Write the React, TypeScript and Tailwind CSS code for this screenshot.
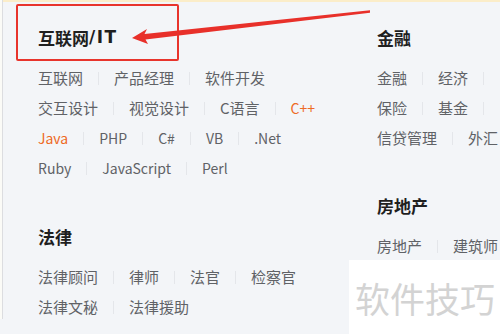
import React from "react";

type Item = { t: string; o?: boolean; l?: boolean };

const Sep = () => <span className="mx-[15px] h-[13px] w-px shrink-0 bg-[#e4e6ea]" />;

const Row = ({ items, trail }: { items: Item[]; trail?: boolean }) => (
  <div className="flex h-[30px] items-center whitespace-nowrap">
    {items.map((it, i) => (
      <React.Fragment key={i}>
        {i > 0 && <Sep />}
        <span
          className={`${it.o ? "text-[#ee6a25]" : "text-[#606266]"} ${it.l ? "text-[14px]" : ""}`}
        >
          {it.t}
        </span>
      </React.Fragment>
    ))}
    {trail && <Sep />}
  </div>
);

const Section = ({
  title,
  rows,
  trails = [],
  className = "",
}: {
  title: React.ReactNode;
  rows: Item[][];
  trails?: boolean[];
  className?: string;
}) => (
  <div className={className}>
    <div className="flex h-[30px] items-center text-[17px] font-bold text-[#1f1f1f]">{title}</div>
    <div className="mt-[10px]">
      {rows.map((r, i) => (
        <Row key={i} items={r} trail={trails[i]} />
      ))}
    </div>
  </div>
);

const s = (...a: string[]): Item[] => a.map((t) => ({ t }));
const L = (...a: string[]): Item[] => a.map((t) => ({ t, l: true }));

export default function App() {
  return (
    <div
      className="relative h-[334px] w-[500px] overflow-hidden bg-[#f3f5f8] text-[15px]"
      style={{ fontFamily: '"Noto Sans CJK SC", "Noto Sans", sans-serif' }}
    >
      <div className="h-[2px] w-full bg-[#fbedc9]" />
      <div className="absolute left-0 top-0 h-[319px] w-[3px] border-r border-[#dcdde0] bg-[#fbfbf7]" />
      <div className="flex pt-[21px]">
        <div className="w-[377px] shrink-0 pl-[38px]">
          <Section
            title={
              <>
                互联网
                <span
                  style={{ fontFamily: '"DejaVu Sans", sans-serif' }}
                  className="text-[17px] tracking-[1.5px]"
                >
                  /IT
                </span>
              </>
            }
            rows={[
              s("互联网", "产品经理", "软件开发"),
              [{ t: "交互设计" }, { t: "视觉设计" }, { t: "C语言" }, { t: "C++", o: true, l: true }],
              [
                { t: "Java", o: true, l: true },
                { t: "PHP", l: true },
                { t: "C#", l: true },
                { t: "VB", l: true },
                { t: ".Net", l: true },
              ],
              L("Ruby", "JavaScript", "Perl"),
            ]}
          />
          <Section
            className="mt-[39px]"
            title="法律"
            rows={[s("法律顾问", "律师", "法官", "检察官"), s("法律文秘", "法律援助")]}
          />
        </div>
        <div className="min-w-0 flex-1 overflow-hidden">
          <Section
            title="金融"
            rows={[s("金融", "经济"), s("保险", "基金"), s("信贷管理", "外汇")]}
            trails={[true, true, false]}
          />
          <Section className="mt-[38px]" title="房地产" rows={[s("房地产", "建筑师")]} />
        </div>
      </div>

      {/* annotation */}
      <div className="absolute left-[16px] top-[4px] h-[57px] w-[163px] rounded-[2px] border-[2.5px] border-[#e8342c]" />
      <svg className="absolute left-0 top-0" width="500" height="334" viewBox="0 0 500 334">
        <polygon
          fill="#e8302a"
          points="132,38 147,29 144.5,34 370,10.3 370,12.7 145.5,39.5 148,44"
        />
      </svg>

      {/* watermark */}
      <div className="absolute left-[349px] top-[260px] flex h-[74px] w-[151px] items-center bg-white pl-[6px]">
        <span className="text-[35px] leading-none text-[#d3d3d3]">软件技巧</span>
      </div>
    </div>
  );
}
